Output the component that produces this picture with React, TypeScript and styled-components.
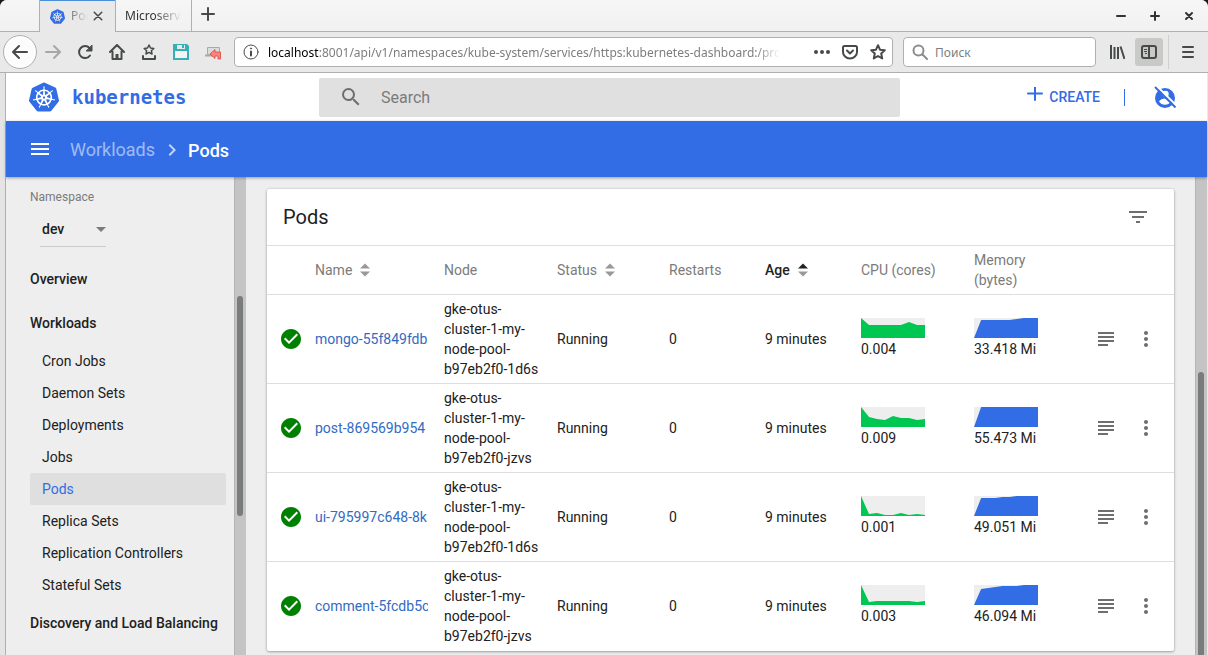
import React from "react";
import styled, { createGlobalStyle, css } from "styled-components";
import {
  MdCheckCircle,
  MdChevronRight,
  MdFilterList,
  MdMenu,
  MdMoreVert,
  MdSearch,
  MdSubject,
} from "react-icons/md";
import { SiKubernetes } from "react-icons/si";

const color = {
  blue: "#326de6",
  link: "#326bc2",
  green: "#00c752",
  ok: "#008000",
  text: "#212121",
  muted: "#7b7b7b",
  line: "#dedede",
  page: "#eeeeee",
  chrome: "#e9e9e9",
  chromeLine: "#b0b0b0",
  glyph: "#474a4b",
};

const uiFont = `"Noto Sans", sans-serif`;
const appFont = `Roboto, sans-serif`;

const GlobalStyle = createGlobalStyle`
  * { box-sizing: border-box; }
  body { margin: 0; background: #1a1a1a; overflow: hidden; }
  button, input, select { font: inherit; color: inherit; margin: 0; }
  button { border: 0; padding: 0; background: none; cursor: pointer; }
  a { text-decoration: none; color: inherit; }
  svg { display: block; flex: none; }
`;

/* ---------- browser window ---------- */

const Window = styled.div`
  height: 100vh;
  display: flex;
  flex-direction: column;
  overflow: hidden;
  border-radius: 7px 7px 0 0;
  background: ${color.chrome};
  font: 12px/16px ${uiFont};
  color: #303334;
`;

const TabBar = styled.div`
  flex: none;
  height: 32px;
  display: flex;
  padding-left: 39px;
  background: linear-gradient(#f6f6f6, #f1f1f1);
  box-shadow: inset 0 -1px 0 ${color.chromeLine};
`;

const Tab = styled.div<{ $active?: boolean }>`
  width: ${(p) => (p.$active ? 77 : 76)}px;
  display: flex;
  align-items: center;
  padding: 0 9px;
  border-right: 1px solid ${color.chromeLine};
  ${(p) =>
    p.$active &&
    css`
      padding: 0 11px 0 10px;
      border-left: 1px solid ${color.chromeLine};
      background: ${color.chrome};
      box-shadow: inset 0 1px 0 #4a90d9;
      color: ${color.blue};
    `}
`;

const TabTitle = styled.span<{ $active?: boolean }>`
  flex: 1;
  min-width: 0;
  margin-left: ${(p) => (p.$active ? 6 : 0)}px;
  overflow: hidden;
  white-space: nowrap;
  color: #303334;
  mask-image: linear-gradient(to right, #000 ${(p) => (p.$active ? "-10px" : "50%")}, transparent);
`;

const TabButton = styled.button`
  width: 12px;
  height: 12px;
  margin-left: 4px;
  color: ${color.glyph};
`;

const NewTab = styled.button`
  width: 32px;
  height: 28px;
  display: grid;
  place-items: center;
  color: ${color.glyph};
`;

const WindowControls = styled.div`
  margin-left: auto;
  display: flex;
  padding-right: 2px;
`;

const WindowButton = styled.button`
  width: 34px;
  display: grid;
  place-items: center;
  color: #2e3436;
`;

const NavBar = styled.div`
  flex: none;
  height: 41px;
  display: flex;
  align-items: center;
  padding: 0 4px 0 3px;
  border-bottom: 1px solid ${color.chromeLine};
`;

const BackButton = styled.button`
  width: 34px;
  height: 34px;
  flex: none;
  display: grid;
  place-items: center;
  border: 1px solid ${color.chromeLine};
  border-radius: 50%;
  background: #fcfcfc;
  color: ${color.glyph};
`;

const ToolButton = styled.button<{ $pressed?: boolean; $faded?: boolean }>`
  width: ${(p) => (p.$pressed ? 28 : 32)}px;
  height: 28px;
  margin: 0 ${(p) => (p.$pressed ? 2 : 0)}px;
  flex: none;
  display: grid;
  place-items: center;
  border-radius: 3px;
  background: ${(p) => (p.$pressed ? "#c9c9c7" : "none")};
  color: ${(p) => (p.$faded ? "#a6a7a7" : color.glyph)};
`;

const Separator = styled.div`
  width: 1px;
  height: 34px;
  margin: 0 3px;
  background: #cfcfcf;
`;

const Field = styled.label`
  height: 30px;
  min-width: 0;
  display: flex;
  align-items: center;
  border: 1px solid ${color.chromeLine};
  border-radius: 4px;
  background: #fff;
`;

const UrlField = styled(Field)`
  flex: 1;
  margin: 0 10px 0 5px;
  padding: 0 6px 0 8px;
  color: ${color.glyph};
`;

const UrlText = styled.div`
  flex: 1;
  min-width: 0;
  margin: 0 34px 0 9px;
  padding-top: 1px;
  overflow: hidden;
  white-space: nowrap;
  color: #7d7d7d;
  mask-image: linear-gradient(to left, transparent, #000 24px);
  b { font-weight: 400; color: #000; }
`;

const UrlActions = styled.div`
  display: flex;
  gap: 12px;
`;

const UrlButton = styled.button`
  width: 16px;
  height: 16px;
`;

const FindField = styled(Field)`
  flex: 0 1 193px;
  margin-right: 5px;
  padding: 0 8px;
  color: #8c8c8c;
  input {
    flex: 1;
    min-width: 0;
    margin-left: 7px;
    padding: 1px 0 0;
    border: 0;
    outline: 0;
    background: none;
  }
  input::placeholder { color: #7d7d7d; opacity: 1; }
`;

/* ---------- dashboard ---------- */

const Viewport = styled.div`
  flex: 1;
  min-height: 0;
  display: flex;
  flex-direction: column;
  margin-right: 1px;
  border-left: 5px solid #e4e4e4;
  font: 14px/20px ${appFont};
  color: ${color.text};
`;

const Page = styled.div`
  flex: 1;
  min-height: 0;
  display: flex;
  flex-direction: column;
  border-left: 1px solid ${color.chromeLine};
  background: ${color.page};
`;

const Header = styled.header`
  flex: none;
  height: 48px;
  display: flex;
  align-items: center;
  background: #fff;
`;

const Brand = styled.a`
  width: 313px;
  display: flex;
  align-items: center;
  gap: 13px;
  padding-left: 23px;
  font: bold 19px/24px "DejaVu Sans Mono", monospace;
  color: ${color.blue};
`;

const SearchBox = styled.label`
  flex: 1;
  height: 39px;
  display: flex;
  align-items: center;
  padding-left: 20px;
  border-radius: 2px;
  background: #e0e0e0;
  color: #6e6e6e;
  input {
    flex: 1;
    margin-left: 18px;
    padding: 2px 0 0;
    border: 0;
    outline: 0;
    background: none;
    font-size: 16px;
  }
  input::placeholder { color: #7b7b7b; opacity: 1; }
`;

const HeaderActions = styled.div`
  width: 307px;
  display: flex;
  align-items: center;
  justify-content: flex-end;
  padding-right: 31px;
  color: ${color.blue};
`;

const CreateButton = styled.button`
  display: flex;
  gap: 6px;
  font-weight: 500;
  text-transform: uppercase;
`;

const Divider = styled.div`
  width: 1px;
  height: 17px;
  margin: 0 29px 0 24px;
  background: ${color.blue};
`;

const ActionBar = styled.nav`
  flex: none;
  height: 56px;
  display: flex;
  align-items: center;
  position: relative;
  padding-left: 22px;
  background: ${color.blue};
  box-shadow: 0 1px 3px rgba(0, 0, 0, 0.35);
  font-size: 18px;
  line-height: 24px;
  font-weight: 500;
  color: #fff;
`;

const Crumb = styled.a`
  margin-left: 18px;
  padding-top: 2px;
  font-weight: 400;
  color: rgba(255, 255, 255, 0.55);
`;

const CurrentCrumb = styled.span`
  padding-top: 3px;
`;

const CrumbArrow = styled.span`
  margin: 2px 4px 0 5px;
  color: rgba(255, 255, 255, 0.7);
`;

const Body = styled.div`
  flex: 1;
  min-height: 0;
  display: flex;
`;

const Sidebar = styled.aside`
  width: 228px;
  flex: none;
  overflow: hidden;
  padding: 10px 8px 0 24px;
`;

const Namespace = styled.div`
  height: 70px;
  label {
    display: block;
    font-size: 12px;
    color: ${color.muted};
  }
`;

const SelectWrap = styled.div`
  width: 66px;
  height: 34px;
  margin: 6px 0 0 10px;
  display: grid;
  align-items: center;
  border-bottom: 1px solid #cfcbcb;
  select, svg { grid-area: 1 / 1; }
  svg { justify-self: end; pointer-events: none; color: #7b7b7b; }
  select {
    appearance: none;
    width: 100%;
    padding: 0 0 1px 2px;
    border: 0;
    outline: 0;
    background: none;
    font-weight: 500;
  }
`;

const NavSection = styled.a`
  display: block;
  line-height: 44px;
  font-weight: 500;
  white-space: nowrap;
`;

const NavItem = styled.a<{ $active?: boolean }>`
  display: block;
  padding-left: 12px;
  line-height: 32px;
  border-radius: 2px;
  background: ${(p) => (p.$active ? "#dfdfdf" : "none")};
  color: ${(p) => (p.$active ? color.blue : "inherit")};
`;

const ScrollTrack = styled.div<{ $rows: string }>`
  width: 12px;
  flex: none;
  display: grid;
  grid-template-rows: ${(p) => p.$rows};
  border-left: 1px solid #b4b4b4;
  background: #c4c4c4;
`;

const ScrollThumb = styled.div<{ $cut?: boolean }>`
  grid-row: 2;
  width: 6px;
  margin-left: 2px;
  border-radius: ${(p) => (p.$cut ? "3px 3px 0 0" : "3px")};
  background: #797c7c;
`;

const Main = styled.main`
  flex: 1;
  min-width: 0;
  overflow: hidden;
  padding: 12px 21px 0 21px;
`;

const Card = styled.section`
  border-radius: 2px;
  background: #fff;
  box-shadow: 0 1px 3px rgba(0, 0, 0, 0.3), 0 0 2px rgba(0, 0, 0, 0.15);
`;

const CardHeader = styled.div`
  height: 57px;
  display: flex;
  align-items: center;
  justify-content: space-between;
  padding: 0 24px 0 16px;
  border-bottom: 1px solid ${color.line};
  color: #6e6e6e;
  h2 {
    margin: 0;
    font-size: 20px;
    font-weight: 400;
    color: ${color.text};
  }
`;

const Table = styled.table`
  width: 100%;
  table-layout: fixed;
  border-collapse: separate;
  border-spacing: 0;
`;

const HeadCell = styled.th<{ $active?: boolean }>`
  height: 49px;
  padding: 4px 16px 4px 0;
  border-bottom: 1px solid ${color.line};
  text-align: left;
  font-weight: ${(p) => (p.$active ? 500 : 400)};
  color: ${(p) => (p.$active ? color.text : color.muted)};
`;

const SortButton = styled.button`
  display: flex;
  align-items: center;
  gap: 7px;
`;

const Cell = styled.td`
  height: 89px;
  padding: 4px 0;
  vertical-align: middle;
  border-bottom: 1px solid ${color.line};
  tr:last-child > & { border-bottom-color: transparent; }
`;

const StatusCell = styled(Cell)`
  padding-left: 12px;
  color: ${color.ok};
`;

const PodLink = styled.a`
  display: block;
  margin-right: 16px;
  overflow: hidden;
  white-space: nowrap;
  color: ${color.link};
`;

const NodeName = styled.div`
  margin-right: 12px;
`;

const Metric = styled.div`
  padding-bottom: 1px;
  svg { margin-bottom: 1px; }
`;

const RowButton = styled.button`
  display: block;
  padding: 0 8px;
  color: #6e6e6e;
`;

/* ---------- icons ---------- */

type StrokeProps = { d: string; size?: number; width?: number; children?: React.ReactNode };

const Stroke = ({ d, size = 16, width = 2, children }: StrokeProps) => (
  <svg
    width={size}
    height={size}
    viewBox="0 0 16 16"
    fill="none"
    stroke="currentColor"
    strokeWidth={width}
    strokeLinecap="round"
    strokeLinejoin="round"
  >
    <path d={d} />
    {children}
  </svg>
);

const SaveIcon = () => (
  <svg width="16" height="16" viewBox="0 0 16 16">
    <path d="M0 0h14l2 2v14H0z" fill="#35b0b5" />
    <path d="M4 1h8v4H4z" fill="#e9e9e9" />
    <path d="M9 1h2v3H9z" fill="#35b0b5" />
    <path d="M2 7h12v7H2z" fill="#f4f4f4" />
  </svg>
);

const DisconnectIcon = () => (
  <svg width="18" height="16" viewBox="0 0 18 16">
    <path d="M3.500 3.500h12v7h-12z" fill="#dcdcdc" stroke="#a9a9a9" />
    <path d="M1 11.500h10" stroke="#a9a9a9" strokeWidth="2" />
    <path d="M6 10l5-4.500V8h5.500v7H14v-3h-3v2.500z" fill="#f7867f" stroke="#e0453f" strokeWidth=".8" />
  </svg>
);

const LibraryIcon = () => (
  <svg width="16" height="16" viewBox="0 0 16 16" stroke="currentColor" strokeWidth="2" fill="none">
    <path d="M2 1v14M5.500 3v12M9 3v12M11.500 2.500l4 12.500" />
  </svg>
);

const SidebarIcon = () => (
  <svg width="16" height="16" viewBox="0 0 16 16" fill="none" stroke="currentColor">
    <rect x="1" y="2" width="14" height="12" rx="2" strokeWidth="2" />
    <path d="M8 2v12" strokeWidth="2" />
    <path d="M3 5.500h3M3 7.500h3M4 9.500h2" />
  </svg>
);

const UserOffIcon = () => (
  <svg width="22" height="22" viewBox="0 0 22 22">
    <circle cx="11" cy="12" r="10" fill="currentColor" />
    <circle cx="11.500" cy="8" r="3.200" fill="#fff" />
    <path d="M5 15.500c1.300-2 3.500-3 6-3s4.700 1 6 3c-1.300 2-3.500 3.300-6 3.300s-4.700-1.300-6-3.300z" fill="#fff" />
    <path d="M2.500-.3L23 20.200" stroke="#fff" strokeWidth="2" />
    <path d="M1 1l20.500 20.500" stroke="currentColor" strokeWidth="2" />
  </svg>
);

const SortIcon = ({ active }: { active?: boolean }) => (
  <svg width="12" height="14" viewBox="0 0 12 14">
    <path d="M1 5.500L6 .5l5 5z" fill={active ? "#212121" : "#999"} />
    <path d="M1 8.500h10l-5 5z" fill="#999" />
  </svg>
);

/* ---------- data ---------- */

type Pod = {
  name: string;
  node: string;
  cpu: string;
  cpuLine: number[];
  memory: string;
  memoryLine: number[];
};

const pods: Pod[] = [
  {
    name: "mongo-55f849fdb8",
    node: "gke-otus-cluster-1-my-node-pool-b97eb2f0-1d6s",
    cpu: "0.004",
    cpuLine: [0, 7, 7, 7, 7, 7, 4, 7, 7],
    memory: "33.418 Mi",
    memoryLine: [20, 2, 2, 2, 2, 2, 1, 0, 0, 0],
  },
  {
    name: "post-869569b954",
    node: "gke-otus-cluster-1-my-node-pool-b97eb2f0-jzvs",
    cpu: "0.009",
    cpuLine: [0, 10, 12, 13, 9, 11, 11, 13, 12],
    memory: "55.473 Mi",
    memoryLine: [20, 0, 0, 0, 0, 0, 0, 0, 0, 0],
  },
  {
    name: "ui-795997c648-8k",
    node: "gke-otus-cluster-1-my-node-pool-b97eb2f0-1d6s",
    cpu: "0.001",
    cpuLine: [0, 18, 17, 19, 19, 17, 19, 18, 19],
    memory: "49.051 Mi",
    memoryLine: [20, 2, 2, 2, 1, 1, 0, 0, 0, 0],
  },
  {
    name: "comment-5fcdb5c",
    node: "gke-otus-cluster-1-my-node-pool-b97eb2f0-jzvs",
    cpu: "0.003",
    cpuLine: [0, 17, 16, 16, 16, 16, 16, 17, 16],
    memory: "46.094 Mi",
    memoryLine: [20, 4, 3, 2, 1, 1, 1, 0, 0, 0],
  },
];

const workloads = [
  "Cron Jobs",
  "Daemon Sets",
  "Deployments",
  "Jobs",
  "Pods",
  "Replica Sets",
  "Replication Controllers",
  "Stateful Sets",
];

const columnWidths = [48, 129, 113, 112, 96, 96, 113, 112, 40, 48];

const Sparkline = ({ values, fill }: { values: number[]; fill: string }) => {
  const step = 64 / (values.length - 1);
  const points = values.map((v, i) => `${i * step},${v}`).join(" ");
  return (
    <svg width="64" height="20" viewBox="0 0 64 20">
      <rect width="64" height="20" fill="#eeeeee" />
      <polygon points={`0,20 ${points} 64,20`} fill={fill} />
    </svg>
  );
};

/* ---------- page parts ---------- */

const BrowserChrome = () => (
  <>
    <TabBar>
      <Tab $active>
        <SiKubernetes size={15} />
        <TabTitle $active>Pods</TabTitle>
        <TabButton aria-label="Close tab">
          <Stroke d="M3 3l10 10M13 3L3 13" size={12} width={2} />
        </TabButton>
      </Tab>
      <Tab>
        <TabTitle>Microservices</TabTitle>
      </Tab>
      <NewTab aria-label="New tab">
        <Stroke d="M8 2v12M2 8h12" />
      </NewTab>
      <WindowControls>
        <WindowButton aria-label="Minimize">
          <Stroke d="M4 8h8" />
        </WindowButton>
        <WindowButton aria-label="Maximize">
          <Stroke d="M4 8h8M8 4v8" />
        </WindowButton>
        <WindowButton aria-label="Close window">
          <Stroke d="M5 5l6 6M11 5l-6 6" />
        </WindowButton>
      </WindowControls>
    </TabBar>
    <NavBar>
      <BackButton aria-label="Back">
        <Stroke d="M15 8H1.500M7 2L1 8l6 6" />
      </BackButton>
      <ToolButton $faded aria-label="Forward">
        <Stroke d="M1 8h13.500M9 2l6 6-6 6" />
      </ToolButton>
      <ToolButton aria-label="Reload">
        <Stroke d="M13 11.500A6 6 0 1 1 12.500 4">
          <path d="M15 1.500v5.500h-5.500z" fill="currentColor" strokeWidth="1" />
        </Stroke>
      </ToolButton>
      <ToolButton aria-label="Home">
        <Stroke d="M1 8l7-7 7 7M3.500 7.500V15h9V7.500">
          <path d="M8 10v4" strokeWidth="3" strokeLinecap="butt" />
        </Stroke>
      </ToolButton>
      <ToolButton aria-label="Bookmarks">
        <Stroke d="M2 12v3h12v-3">
          <path d="M8 1l1.500 3 3.300.4-2.400 2.300.6 3.300-3-1.600L5 10l.6-3.300-2.400-2.300 3.300-.4z" strokeWidth="1.500" />
        </Stroke>
      </ToolButton>
      <ToolButton aria-label="Save page">
        <SaveIcon />
      </ToolButton>
      <ToolButton aria-label="Connection">
        <DisconnectIcon />
      </ToolButton>
      <UrlField as="div">
        <Stroke d="M8 7.500v4" width={2}>
          <circle cx="8" cy="8" r="7" strokeWidth="1" />
          <circle cx="8" cy="4.500" r=".6" strokeWidth="1" />
        </Stroke>
        <UrlText>
          <b>localhost</b>:8001/api/v1/namespaces/kube-system/services/https:kubernetes-dashboard:/proxy/
        </UrlText>
        <UrlActions>
          <UrlButton aria-label="Page actions">
            <svg width="16" height="16" viewBox="0 0 16 16" fill="currentColor">
              <circle cx="2" cy="8" r="2" />
              <circle cx="8" cy="8" r="2" />
              <circle cx="14" cy="8" r="2" />
            </svg>
          </UrlButton>
          <UrlButton aria-label="Save to Pocket">
            <Stroke d="M2.500 2h11A1.500 1.500 0 0 1 15 3.500V8A7 6.500 0 0 1 1 8V3.500A1.500 1.500 0 0 1 2.500 2zM5 6.500l3 3 3-3" />
          </UrlButton>
          <UrlButton aria-label="Bookmark this page">
            <Stroke d="M8 1.200l2 4.500 4.800.5-3.600 3.300 1 4.900L8 12l-4.200 2.400 1-4.900L1.200 6.200 6 5.700z" />
          </UrlButton>
        </UrlActions>
      </UrlField>
      <FindField>
        <Stroke d="M10.500 10.500L15 15">
          <circle cx="6.500" cy="6.500" r="5" />
        </Stroke>
        <input placeholder="Поиск" aria-label="Поиск" />
      </FindField>
      <ToolButton aria-label="Library">
        <LibraryIcon />
      </ToolButton>
      <ToolButton $pressed aria-label="Sidebars">
        <SidebarIcon />
      </ToolButton>
      <Separator />
      <ToolButton aria-label="Menu">
        <Stroke d="M3 3h10M3 8h10M3 13h10" />
      </ToolButton>
    </NavBar>
  </>
);

const PodRow = ({ pod }: { pod: Pod }) => (
  <tr>
    <StatusCell>
      <MdCheckCircle size={24} />
    </StatusCell>
    <Cell>
      <PodLink href="#">{pod.name}</PodLink>
    </Cell>
    <Cell>
      <NodeName>{pod.node}</NodeName>
    </Cell>
    <Cell>Running</Cell>
    <Cell>0</Cell>
    <Cell>9 minutes</Cell>
    <Cell>
      <Metric>
        <Sparkline values={pod.cpuLine} fill={color.green} />
        {pod.cpu}
      </Metric>
    </Cell>
    <Cell>
      <Metric>
        <Sparkline values={pod.memoryLine} fill={color.blue} />
        {pod.memory}
      </Metric>
    </Cell>
    <Cell>
      <RowButton aria-label="Logs">
        <MdSubject size={24} />
      </RowButton>
    </Cell>
    <Cell>
      <RowButton aria-label="Actions">
        <MdMoreVert size={24} />
      </RowButton>
    </Cell>
  </tr>
);

const PodsCard = () => (
  <Card>
    <CardHeader>
      <h2>Pods</h2>
      <button aria-label="Filter">
        <MdFilterList size={24} />
      </button>
    </CardHeader>
    <Table>
      <colgroup>
        {columnWidths.map((width, i) => (
          <col key={i} width={width} />
        ))}
      </colgroup>
      <thead>
        <tr>
          <HeadCell />
          <HeadCell>
            <SortButton>
              Name <SortIcon />
            </SortButton>
          </HeadCell>
          <HeadCell>Node</HeadCell>
          <HeadCell>
            <SortButton>
              Status <SortIcon />
            </SortButton>
          </HeadCell>
          <HeadCell>Restarts</HeadCell>
          <HeadCell $active>
            <SortButton>
              Age <SortIcon active />
            </SortButton>
          </HeadCell>
          <HeadCell>CPU (cores)</HeadCell>
          <HeadCell>Memory (bytes)</HeadCell>
          <HeadCell />
          <HeadCell />
        </tr>
      </thead>
      <tbody>
        {pods.map((pod) => (
          <PodRow key={pod.name} pod={pod} />
        ))}
      </tbody>
    </Table>
  </Card>
);

export default function App() {
  return (
    <>
      <GlobalStyle />
      <Window>
        <BrowserChrome />
        <Viewport>
          <Page>
            <Header>
              <Brand href="#">
                <SiKubernetes size={30} />
                kubernetes
              </Brand>
              <SearchBox>
                <MdSearch size={24} />
                <input placeholder="Search" aria-label="Search" />
              </SearchBox>
              <HeaderActions>
                <CreateButton>
                  <Stroke d="M8 0v13M1 6.500h14" />
                  Create
                </CreateButton>
                <Divider />
                <button aria-label="User">
                  <UserOffIcon />
                </button>
              </HeaderActions>
            </Header>
            <ActionBar>
              <button aria-label="Toggle menu">
                <MdMenu size={24} />
              </button>
              <Crumb href="#">Workloads</Crumb>
              <CrumbArrow>
                <MdChevronRight size={24} />
              </CrumbArrow>
              <CurrentCrumb>Pods</CurrentCrumb>
            </ActionBar>
            <Body>
              <Sidebar>
                <Namespace>
                  <label htmlFor="namespace">Namespace</label>
                  <SelectWrap>
                    <select id="namespace" defaultValue="dev">
                      <option value="dev">dev</option>
                    </select>
                    <svg width="10" height="5" viewBox="0 0 10 5">
                      <path d="M0 0h10L5 5z" fill="currentColor" />
                    </svg>
                  </SelectWrap>
                </Namespace>
                <NavSection href="#">Overview</NavSection>
                <NavSection href="#">Workloads</NavSection>
                {workloads.map((item) => (
                  <NavItem key={item} href="#" $active={item === "Pods"}>
                    {item}
                  </NavItem>
                ))}
                <NavSection href="#">Discovery and Load Balancing</NavSection>
              </Sidebar>
              <ScrollTrack $rows="119fr 220fr 139fr">
                <ScrollThumb />
              </ScrollTrack>
              <Main>
                <PodsCard />
              </Main>
              <ScrollTrack $rows="195fr 283fr">
                <ScrollThumb $cut />
              </ScrollTrack>
            </Body>
          </Page>
        </Viewport>
      </Window>
    </>
  );
}
